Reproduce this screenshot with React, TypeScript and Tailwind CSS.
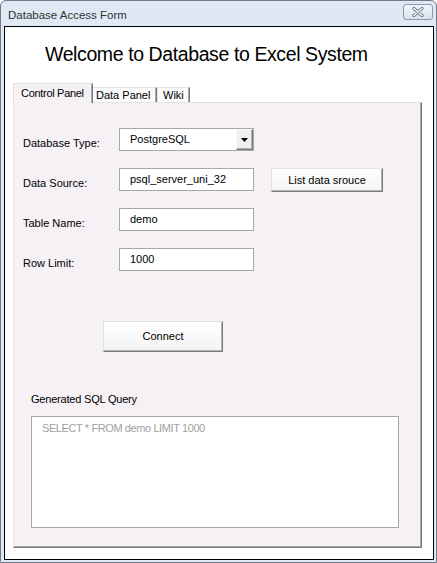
import React from "react";

const font = { fontFamily: '"Liberation Sans", Arial, sans-serif' };

function Label({ text }: { text: string }) {
  return (
    <div className="w-[96px] pt-[9px] text-[11px] leading-[13px] text-black">{text}</div>
  );
}

function TextBox({ value }: { value: string }) {
  return (
    <div className="w-[135px] h-[23px] border border-[#a8a8a8] bg-white pl-[10px] flex items-center text-[11px] leading-[13px] text-black">
      {value}
    </div>
  );
}

export default function App() {
  return (
    <div className="w-[437px] h-[563px] bg-white" style={font}>
      <div className="w-[437px] h-[563px] border border-[#737b86] rounded-t-[6px] bg-[#dfe8f3] flex flex-col">
        {/* title bar */}
        <div className="h-[25px] flex items-start justify-between pr-[3px]">
          <div className="pl-[7px] pt-[7px] text-[11.5px] leading-[14px] text-[#333]">Database Access Form</div>
          <div className="mt-[3px] w-[30px] h-[16px] rounded-[3px] border border-[#8c9aab] bg-gradient-to-b from-[#f1f5fa] to-[#d9e2ec] flex items-center justify-center">
            <svg width="12" height="10" viewBox="0 0 12 10">
              <path d="M2 1.5 L10 8.5 M10 1.5 L2 8.5" stroke="#6b7684" strokeWidth="3.2" strokeLinecap="round" fill="none" />
              <path d="M2 1.5 L10 8.5 M10 1.5 L2 8.5" stroke="#ffffff" strokeWidth="1.4" strokeLinecap="round" fill="none" />
            </svg>
          </div>
        </div>
        {/* client area */}
        <div className="flex-1 pl-[3px] pr-[2px] pb-[2px] flex flex-col">
          <div className="flex-1 border border-black bg-white flex flex-col">
            <div className="mt-[18px] pl-[40px] h-[19px] text-[19.5px] leading-[19px] tracking-[-0.4px] text-black whitespace-nowrap">
              Welcome to Database to Excel System
            </div>
            {/* tabs */}
            <div className="mt-[19px] ml-[8px] h-[19px] flex items-end text-[11px] leading-[13px] text-black">
              <div className="relative z-10 mb-[-1px] w-[80px] h-[20px] bg-[#f5f1f5] border-l border-t border-[#e0e0e0] border-r border-r-[#777] shadow-[inset_-1px_0_0_#a8a8a8] pl-[7px] pt-[3px] tracking-[-0.3px]">
                Control Panel
              </div>
              <div className="w-[64px] h-[15px] bg-[#fbfafb] border-t border-[#e3e3e3] border-r border-r-[#777] shadow-[inset_-1px_0_0_#a8a8a8] pl-[3px] pt-[1px]">
                Data Panel
              </div>
              <div className="w-[33px] h-[15px] bg-[#fbfafb] border-l border-t border-[#e3e3e3] border-r border-r-[#777] shadow-[inset_-1px_0_0_#a8a8a8] pl-[5px] pt-[1px]">
                Wiki
              </div>
            </div>
            {/* panel */}
            <div className="flex-1 ml-[8px] mr-[11px] mb-[11px] bg-[#f5f1f5] border border-t-[#e3e3e3] border-l-[#e3e3e3] border-r-[#7a7a7a] border-b-[#7a7a7a] shadow-[inset_-1px_-1px_0_#a8a8a8] flex flex-col text-[11px] leading-[13px] text-black">
              <div className="pt-[25px] pl-[9px] flex flex-col gap-[17px]">
                <div className="h-[23px] flex items-start">
                  <Label text="Database Type:" />
                  <div className="w-[135px] h-[23px] border border-[#a8a8a8] bg-white flex items-center">
                    <div className="flex-1 pl-[10px]">PostgreSQL</div>
                    <div className="w-[17px] h-[21px] bg-[#efefef] border-t border-l border-[#f8f8f8] border-r border-b border-r-[#7a7a7a] border-b-[#7a7a7a] shadow-[inset_-1px_-1px_0_#b0b0b0] flex items-center justify-center">
                      <svg width="7" height="4" viewBox="0 0 7 4">
                        <polygon points="0,0 7,0 3.5,4" fill="#000" />
                      </svg>
                    </div>
                  </div>
                </div>
                <div className="h-[23px] flex items-start">
                  <Label text="Data Source:" />
                  <TextBox value="psql_server_uni_32" />
                  <div className="ml-[17px] w-[112px] h-[24px] bg-gradient-to-b from-[#ffffff] to-[#f3f3f3] border border-t-[#e2e2e2] border-l-[#e2e2e2] border-r-[#7a7a7a] border-b-[#7a7a7a] shadow-[inset_-1px_-1px_0_#b4b4b4] flex items-center justify-center">
                    List data srouce
                  </div>
                </div>
                <div className="h-[23px] flex items-start">
                  <Label text="Table Name:" />
                  <TextBox value="demo" />
                </div>
                <div className="h-[23px] flex items-start">
                  <Label text="Row Limit:" />
                  <TextBox value="1000" />
                </div>
              </div>
              <div className="mt-[50px] ml-[89px] w-[120px] h-[31px] bg-gradient-to-b from-[#ffffff] to-[#f3f3f3] border border-t-[#e2e2e2] border-l-[#e2e2e2] border-r-[#7a7a7a] border-b-[#7a7a7a] shadow-[inset_-1px_-1px_0_#b4b4b4] flex items-center justify-center">
                Connect
              </div>
              <div className="mt-[41px] ml-[17px] tracking-[-0.2px]">Generated SQL Query</div>
              <div className="mt-[10px] ml-[17px] w-[368px] h-[112px] border border-[#a8a8a8] bg-white pl-[10px] pt-[5px] text-[#a0a0a0] tracking-[-0.4px]">
                SELECT * FROM demo LIMIT 1000
              </div>
            </div>
          </div>
        </div>
      </div>
    </div>
  );
}
